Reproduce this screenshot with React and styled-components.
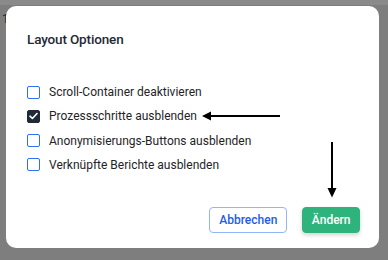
import React, { useState } from "react";
import styled, { createGlobalStyle } from "styled-components";

const GlobalStyle = createGlobalStyle`
  html, body {
    margin: 0;
    padding: 0;
    width: 388px;
    height: 260px;
    overflow: hidden;
    font-family: Roboto, "Liberation Sans", sans-serif;
  }
`;

const Backdrop = styled.div`
  position: relative;
  width: 388px;
  height: 260px;
  background: #7e7e7e;
  overflow: hidden;
`;

const PageStrip = styled.div`
  height: 5px;
  background: #8a8a8a;
`;

const PageText = styled.div`
  padding: 7px 0 0 2px;
  font-size: 12px;
  color: #2a2a2a;
`;

const Dialog = styled.div`
  position: absolute;
  left: 6px;
  top: 6px;
  width: 373px;
  height: 242px;
  box-sizing: border-box;
  background: #fff;
  border-radius: 10px;
  padding: 24px 19px 15px 21px;
  display: flex;
  flex-direction: column;
`;

const Title = styled.h2`
  margin: 0;
  font-size: 13.5px;
  font-weight: 500;
  color: #1f2937;
  line-height: 18px;
  letter-spacing: -0.15px;
`;

const OptionList = styled.div`
  margin-top: 36px;
  display: flex;
  flex-direction: column;
  gap: 8.3px;
`;

const Row = styled.label`
  display: flex;
  align-items: center;
  gap: 9px;
  height: 16px;
  font-size: 12px;
  color: #1f2328;
  cursor: pointer;
`;

const Box = styled.span`
  width: 13px;
  height: 13px;
  box-sizing: border-box;
  border-radius: 2px;
  border: 1.5px solid ${(p) => (p.$checked ? "#1f2937" : "#2f6ff5")};
  background: ${(p) => (p.$checked ? "#1f2937" : "#fff")};
  display: flex;
  align-items: center;
  justify-content: center;
  flex-shrink: 0;
`;

const LeftArrow = styled.svg`
  display: block;
  flex-shrink: 0;
  margin-left: -4px;
`;

const DownArrow = styled.svg`
  position: absolute;
  left: 50%;
  bottom: 100%;
  margin-bottom: 9px;
  transform: translateX(-4px);
`;

const Footer = styled.div`
  margin-top: auto;
  display: flex;
  justify-content: flex-end;
  align-items: flex-end;
  gap: 15px;
`;

const ButtonCol = styled.div`
  position: relative;
`;

const Button = styled.button`
  height: 26px;
  box-sizing: border-box;
  border-radius: 4px;
  font-family: Roboto, "Liberation Sans", sans-serif;
  font-size: 12px;
  font-weight: 500;
  padding: 0 ${(p) => (p.$primary ? "8.5px" : "9px")};
  border: 1.5px solid ${(p) => (p.$primary ? "#2fb37c" : "#93b3fb")};
  background: ${(p) => (p.$primary ? "#2fb37c" : "#fff")};
  color: ${(p) => (p.$primary ? "#fff" : "#1d5cf0")};
  box-shadow: ${(p) => (p.$primary ? "0 2px 4px rgba(0,0,0,0.18)" : "none")};
  cursor: pointer;
`;

const options = [
  "Scroll-Container deaktivieren",
  "Prozessschritte ausblenden",
  "Anonymisierungs-Buttons ausblenden",
  "Verknüpfte Berichte ausblenden",
];

function Check() {
  return (
    <svg width="9" height="8" viewBox="0 0 9 8">
      <path d="M1 4.2 L3.4 6.5 L8 1.5" fill="none" stroke="#fff" strokeWidth="1.6" strokeLinecap="round" strokeLinejoin="round" />
    </svg>
  );
}

export default function App() {
  const [checked, setChecked] = useState([false, true, false, false]);

  return (
    <>
      <GlobalStyle />
      <Backdrop>
        <PageStrip />
        <PageText>1</PageText>
        <Dialog>
          <Title>Layout Optionen</Title>
          <OptionList>
            {options.map((text, i) => (
              <Row
                key={text}
                onClick={() =>
                  setChecked((prev) => prev.map((c, j) => (j === i ? !c : c)))
                }
              >
                <Box $checked={checked[i]}>{checked[i] && <Check />}</Box>
                <span>{text}</span>
                {i === 1 && (
                  <LeftArrow width="78" height="10" viewBox="0 0 78 10">
                    <path d="M78 5 H7" stroke="#000" strokeWidth="2" />
                    <path d="M0 5 L9 0.5 L9 9.5 Z" fill="#000" />
                  </LeftArrow>
                )}
              </Row>
            ))}
          </OptionList>
          <Footer>
            <Button>Abbrechen</Button>
            <ButtonCol>
              <DownArrow width="10" height="56" viewBox="0 0 10 56">
                <path d="M5 0 V48" stroke="#000" strokeWidth="2" />
                <path d="M0.5 46 L9.5 46 L5 55.5 Z" fill="#000" />
              </DownArrow>
              <Button $primary>Ändern</Button>
            </ButtonCol>
          </Footer>
        </Dialog>
      </Backdrop>
    </>
  );
}
